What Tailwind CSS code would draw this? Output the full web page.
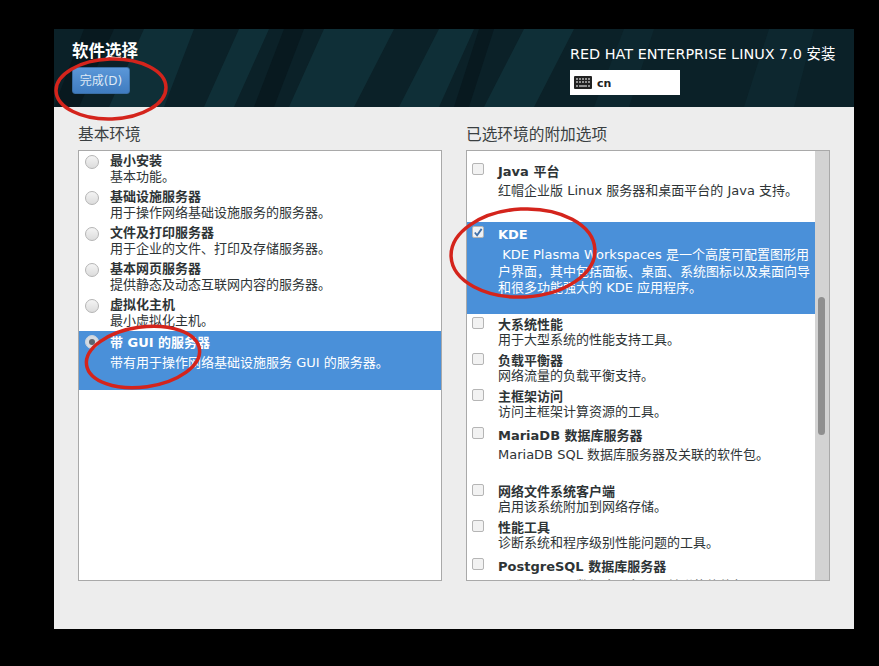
<!DOCTYPE html>
<html lang="zh">
<head>
    <meta charset="UTF-8">
    <title>软件选择</title>
    <script src="https://cdn.jsdelivr.net/npm/@tailwindcss/browser@4"></script>
</head>
<body class="bg-black w-[879px] h-[666px] overflow-hidden font-['DejaVu_Sans','Noto_Sans_CJK_SC',sans-serif] text-[13px] text-[#2e3436]">
    <div class="relative ml-[54px] mt-[29px] w-[800px] h-[600px] bg-[#ededed]">
        <!-- header -->
        <header class="relative h-[78px] bg-[#0d2a30] overflow-hidden text-white">
            <svg class="absolute inset-0" width="800" height="78" viewBox="0 0 800 78">
                <rect width="800" height="78" fill="#0b2128"/>
                <path d="M55 78 L90 0 H140 L110 78Z M150 78 L185 0 H215 L180 78Z M235 78 L270 0 H340 L300 78Z M345 78 L385 0 H420 L385 78Z M430 78 L470 0 H520 L480 78Z" fill="#12343c" opacity="0.75"/>
                <path d="M540 78 L570 0 H600 L575 78Z M690 78 L715 0 H760 L740 78Z" fill="#12343c" opacity="0.35"/>
                <path d="M0 78 L30 0 H60 L25 78Z M200 78 L230 0 H250 L220 78Z M400 78 L425 0 H440 L415 78Z" fill="#08191f"/>
            </svg>
            <div class="relative flex justify-between pl-[18px] pr-[18px]">
                <div>
                    <h1 class="mt-[13px] text-[16.5px] leading-[20px] font-bold">软件选择</h1>
                    <button class="mt-[5px] w-[58px] h-[27px] rounded-[3px] border border-[#3a6ea5] bg-gradient-to-b from-[#5b97d8] to-[#3f7cc0] text-[12px] text-[#dfe9f5]">完成(D)</button>
                </div>
                <div class="w-[266px]">
                    <div class="mt-[15px] text-[14.4px] leading-[20px] whitespace-nowrap">RED HAT ENTERPRISE LINUX 7.0 安装</div>
                    <div class="mt-[6px] w-[110px] h-[25px] bg-white flex items-center pl-[4px] gap-[5px] text-[#222] text-[11px] font-bold">
                        <svg width="18" height="13" viewBox="0 0 18 13"><rect width="18" height="13" rx="1" fill="#222"/><path d="M2 3h2M5 3h2M8 3h2M11 3h2M14 3h2M2 6h2M5 6h2M8 6h2M11 6h2M14 6h2M2 10h2M5 10h8M14 10h2" stroke="#fff" stroke-width="1.2"/></svg>
                        <span class="mt-[4px]">cn</span>
                    </div>
                </div>
            </div>
        </header>

        <!-- two columns -->
        <main class="flex gap-[24px] pl-[24px] pt-[18px]">
            <section class="w-[364px]">
                <h2 class="text-[15.7px] leading-[20px] mb-[5px] text-[#3a3f41]">基本环境</h2>
                <div class="h-[431px] bg-white border border-[#a9a9a9] overflow-hidden">
                    <div class="h-[36px] flex pl-[6px] pt-[2px]"><span class="mt-[2px] w-[14px] h-[14px] rounded-full border border-[#b5b5b5] bg-gradient-to-b from-[#f4f4f4] to-[#dcdcdc]"></span><div class="ml-[11px] leading-[16px]"><div class="font-bold">最小安装</div><div>基本功能。</div></div></div>
                    <div class="h-[36px] flex pl-[6px] pt-[2px]"><span class="mt-[2px] w-[14px] h-[14px] rounded-full border border-[#b5b5b5] bg-gradient-to-b from-[#f4f4f4] to-[#dcdcdc]"></span><div class="ml-[11px] leading-[16px]"><div class="font-bold">基础设施服务器</div><div>用于操作网络基础设施服务的服务器。</div></div></div>
                    <div class="h-[36px] flex pl-[6px] pt-[2px]"><span class="mt-[2px] w-[14px] h-[14px] rounded-full border border-[#b5b5b5] bg-gradient-to-b from-[#f4f4f4] to-[#dcdcdc]"></span><div class="ml-[11px] leading-[16px]"><div class="font-bold">文件及打印服务器</div><div>用于企业的文件、打印及存储服务器。</div></div></div>
                    <div class="h-[36px] flex pl-[6px] pt-[2px]"><span class="mt-[2px] w-[14px] h-[14px] rounded-full border border-[#b5b5b5] bg-gradient-to-b from-[#f4f4f4] to-[#dcdcdc]"></span><div class="ml-[11px] leading-[16px]"><div class="font-bold">基本网页服务器</div><div>提供静态及动态互联网内容的服务器。</div></div></div>
                    <div class="h-[36px] flex pl-[6px] pt-[2px]"><span class="mt-[2px] w-[14px] h-[14px] rounded-full border border-[#b5b5b5] bg-gradient-to-b from-[#f4f4f4] to-[#dcdcdc]"></span><div class="ml-[11px] leading-[16px]"><div class="font-bold">虚拟化主机</div><div>最小虚拟化主机。</div></div></div>
                    <div class="h-[59px] flex pl-[6px] pt-[4px] bg-[#4a90d9] text-white">
                        <span class="w-[14px] h-[14px] rounded-full border border-[#c9d3de] bg-[#d5dbe2] flex items-center justify-center"><span class="w-[6px] h-[6px] rounded-full bg-[#5d6670]"></span></span>
                        <div class="ml-[11px]"><div class="font-bold leading-[16px]">带 GUI 的服务器</div><div class="mt-[4px] leading-[16px]">带有用于操作网络基础设施服务 GUI 的服务器。</div></div>
                    </div>
                </div>
            </section>

            <section class="w-[364px]">
                <h2 class="text-[15.7px] leading-[20px] mb-[5px] text-[#3a3f41]">已选环境的附加选项</h2>
                <div class="relative h-[431px] bg-white border border-[#a9a9a9] overflow-hidden flex">
                    <div class="w-[349px] pt-[12px]">
                        <div class="h-[59px] flex pl-[5px]"><span class="w-[12px] h-[12px] rounded-[2px] border border-[#b5b5b5] bg-[#f2f2f2]"></span><div class="ml-[14px]"><div class="font-bold leading-[17px]">Java 平台</div><div class="mt-[2px] leading-[17px]">红帽企业版 Linux 服务器和桌面平台的 Java 支持。</div></div></div>
                        <div class="h-[92px] flex pl-[5px] pt-[4px] bg-[#4a90d9] text-white">
                            <span class="w-[12px] h-[12px] rounded-[2px] border border-[#b5b5b5] bg-[#eef2f6] flex items-center justify-center">
                                <svg width="11" height="11" viewBox="0 0 11 11"><path d="M2 5.5 L4.5 8.5 L9.5 1.5" fill="none" stroke="#3f6fa8" stroke-width="2"/></svg>
                            </span>
                            <div class="ml-[14px]"><div class="font-bold leading-[17px]">KDE</div><div class="mt-[4px] leading-[16.5px] w-[315px]">&nbsp;KDE Plasma Workspaces 是一个高度可配置图形用户界面，其中包括面板、桌面、系统图标以及桌面向导和很多功能强大的 KDE 应用程序。</div></div>
                        </div>
                        <div class="h-[36px] flex pl-[5px] pt-[3px]"><span class="w-[12px] h-[12px] rounded-[2px] border border-[#b5b5b5] bg-[#f2f2f2]"></span><div class="ml-[14px] leading-[15px]"><div class="font-bold">大系统性能</div><div>用于大型系统的性能支持工具。</div></div></div>
                        <div class="h-[36px] flex pl-[5px] pt-[3px]"><span class="w-[12px] h-[12px] rounded-[2px] border border-[#b5b5b5] bg-[#f2f2f2]"></span><div class="ml-[14px] leading-[15px]"><div class="font-bold">负载平衡器</div><div>网络流量的负载平衡支持。</div></div></div>
                        <div class="h-[38px] flex pl-[5px] pt-[3px]"><span class="w-[12px] h-[12px] rounded-[2px] border border-[#b5b5b5] bg-[#f2f2f2]"></span><div class="ml-[14px] leading-[15px]"><div class="font-bold">主框架访问</div><div>访问主框架计算资源的工具。</div></div></div>
                        <div class="h-[57px] flex pl-[5px] pt-[3px]"><span class="w-[12px] h-[12px] rounded-[2px] border border-[#b5b5b5] bg-[#f2f2f2]"></span><div class="ml-[14px]"><div class="font-bold leading-[17px]">MariaDB 数据库服务器</div><div class="mt-[2px] leading-[17px]">MariaDB SQL 数据库服务器及关联的软件包。</div></div></div>
                        <div class="h-[36px] flex pl-[5px] pt-[3px]"><span class="w-[12px] h-[12px] rounded-[2px] border border-[#b5b5b5] bg-[#f2f2f2]"></span><div class="ml-[14px] leading-[15px]"><div class="font-bold">网络文件系统客户端</div><div>启用该系统附加到网络存储。</div></div></div>
                        <div class="h-[38px] flex pl-[5px] pt-[3px]"><span class="w-[12px] h-[12px] rounded-[2px] border border-[#b5b5b5] bg-[#f2f2f2]"></span><div class="ml-[14px] leading-[15px]"><div class="font-bold">性能工具</div><div>诊断系统和程序级别性能问题的工具。</div></div></div>
                        <div class="flex pl-[5px] pt-[3px]"><span class="w-[12px] h-[12px] rounded-[2px] border border-[#b5b5b5] bg-[#f2f2f2]"></span><div class="ml-[14px]"><div class="font-bold leading-[17px]">PostgreSQL 数据库服务器</div><div class="mt-[2px] leading-[17px] text-[#6b6f70]">PostgreSQL 数据库服务器及关联的软件包。</div></div></div>
                    </div>
                    <div class="w-[14px] h-full bg-[#d3d3d3] pt-[146px] pl-[3px]">
                        <div class="w-[7px] h-[138px] rounded-full bg-[#8f8f8f]"></div>
                    </div>
                </div>
            </section>
        </main>

        <!-- red hand-drawn circles on top of the shot -->
        <svg class="absolute left-0 top-0 pointer-events-none" width="800" height="600" viewBox="0 0 800 600">
            <g fill="none" stroke="#d4241c" stroke-width="3.5">
                <ellipse cx="57" cy="60" rx="55" ry="30" transform="rotate(-2 57 60)"/>
                <ellipse cx="89" cy="328" rx="57" ry="30" transform="rotate(-8 89 328)"/>
                <ellipse cx="469" cy="224" rx="72" ry="44" transform="rotate(-3 469 224)"/>
            </g>
        </svg>
    </div>
</body>
</html>
